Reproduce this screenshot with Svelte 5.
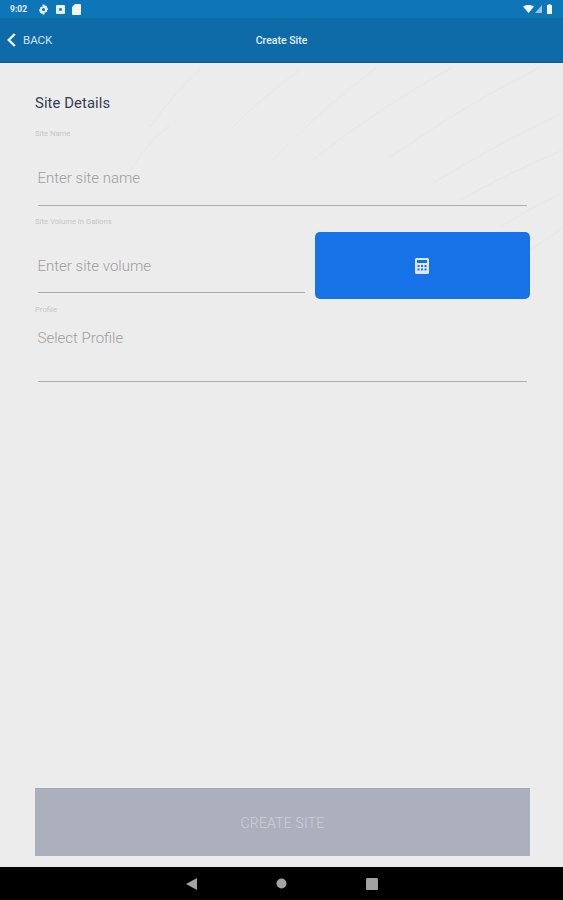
<script>
  const lines = [
    'M150 127 Q172 95 200 70', 'M233 127 Q262 97 300 70', 'M273 160 Q320 110 377 67', 'M313 160 Q375 110 453 67',
    'M390 157 Q460 108 540 67', 'M433 183 Q495 145 563 113', 'M460 200 Q510 172 563 150', 'M500 227 Q530 208 563 193',
    'M130 170 Q150 140 170 125', 'M530 250 L563 228'
  ];
</script>

<div class="screen">
  <header class="appbar">
    <div class="status">
      <span class="time">9:02</span>
      <svg class="ic" viewBox="0 0 12 12" width="11" height="11"><path fill="#e8f1f8" fill-rule="evenodd" d="M5 .5h2l.3 1.5 1-.5 1.500.9-.2 1.200 1.100.9v1.900l-1.100.9.2 1.200-1.500.9-1-.5L7 11.500H5l-.3-1.500-1 .5-1.500-.9.2-1.200L1.300 7.900V6L2.400 5.100 2.200 3.900 3.700 3l1 .5zM6 4.300a1.700 1.700 0 1 0 0 3.400 1.700 1.700 0 0 0 0-3.400z"/></svg>
      <svg class="ic box" viewBox="0 0 10 10" width="9" height="9"><path fill="#e8f1f8" fill-rule="evenodd" d="M1 0h8a1 1 0 0 1 1 1v8a1 1 0 0 1-1 1H1a1 1 0 0 1-1-1V1a1 1 0 0 1 1-1zM3.500 3.500v3h3v-3z"/></svg>
      <svg class="ic card" viewBox="0 0 9 11" width="9" height="11"><path fill="#f0f5fa" d="M3 0h5a1 1 0 0 1 1 1v9a1 1 0 0 1-1 1H1a1 1 0 0 1-1-1V3z"/></svg>
      <span class="spacer"></span>
      <svg viewBox="0 0 11 8" width="11" height="8"><path fill="#f4f8fb" d="M0 1.500C3 -.5 8 -.5 11 1.500L5.500 8z"/></svg>
      <svg class="signal" viewBox="0 0 7 8" width="7" height="8"><path fill="#9dc3dd" d="M7 0v8H0z"/></svg>
      <svg class="battery" viewBox="0 0 5 10" width="5" height="10"><path fill="#f4f8fb" d="M1.500 0h2v1H5v9H0V1h1.500z"/></svg>
    </div>
    <div class="toolbar">
      <div class="back">
        <svg viewBox="0 0 9 14" width="9" height="14"><path fill="none" stroke="#eef5fa" stroke-width="2.400" d="M7.800 1 1.800 7l6 6"/></svg>
        <span>BACK</span>
      </div>
      <span class="title">Create Site</span>
    </div>
  </header>

  <main class="content">
    <svg class="swirl" viewBox="0 63 563 300" width="563" height="300" aria-hidden="true">
      {#each lines as d}<path {d} fill="none" stroke="#e6e6e6" stroke-width="1"/>{/each}
    </svg>

    <div class="form">
      <h1>Site Details</h1>

      <label class="small first" for="name">Site Name</label>
      <div class="field name"><span id="name">Enter site name</span></div>

      <label class="small second" for="vol">Site Volume in Gallons</label>
      <div class="volume-row">
        <div class="field volume"><span id="vol">Enter site volume</span></div>
        <button class="calc" aria-label="Calculator">
          <svg viewBox="0 0 14 16" width="14" height="16"><path fill="#dfe8f8" fill-rule="evenodd" d="M1.500 0h11A1.500 1.500 0 0 1 14 1.500v13a1.500 1.500 0 0 1-1.500 1.500h-11A1.500 1.500 0 0 1 0 14.500v-13A1.500 1.500 0 0 1 1.500 0zM2 2v3h10V2zM2.500 7v2h2V7zm3.500 0v2h2V7zm3.500 0v2h2V7zm-7 3.500v2h2v-2zm3.500 0v2h2v-2zm3.500 0v2h2v-2z"/></svg>
        </button>
      </div>

      <label class="small third" for="profile">Profile</label>
      <div class="field profile"><span id="profile">Select Profile</span></div>
    </div>

    <button class="create">CREATE SITE</button>
  </main>

  <nav class="sysnav">
    <svg viewBox="0 0 11 12" width="11" height="12"><path fill="#a3a3a3" d="M11 0v12L0 6z"/></svg>
    <svg viewBox="0 0 11 11" width="11" height="11"><circle cx="5.500" cy="5.500" r="5" fill="#a3a3a3"/></svg>
    <svg viewBox="0 0 12 12" width="12" height="12"><rect width="12" height="12" rx="1.500" fill="#a3a3a3"/></svg>
  </nav>
</div>

<style>
  :global(body) { margin: 0; background: #ececec; }
  .screen {
    width: 563px; height: 900px; display: flex; flex-direction: column;
    font-family: "Roboto", "Noto Sans", sans-serif; overflow: hidden;
  }
  .appbar { flex: none; height: 63px; background: #0e6ba8; box-shadow: inset 0 -1px 0 #0b5f9e; }
  .status {
    height: 18px; background: #0f75b9; display: flex; align-items: center;
    padding: 0 10px; color: #e8f1f8;
  }
  .time { font-size: 8.500px; font-weight: 700; width: 24px; margin-right: 4px; }
  .ic { margin-right: 7px; }
  .spacer { flex: 1; }
  .signal { margin: 0 2px 0 1px; }
  .battery { margin: 0 1px 0 3px; }
  .toolbar { position: relative; height: 44px; display: flex; align-items: center; justify-content: center; }
  .back {
    position: absolute; left: 7px; top: 15px; display: flex; align-items: center; gap: 7px;
    color: #d3e3f0; font-size: 11.500px;
  }
  .title { color: #e6eff6; font-size: 10.500px; font-weight: 500; }
  .content { position: relative; flex: 1; display: flex; flex-direction: column; padding: 0 33px 11px 35px; background: #ececec; }
  .swirl { position: absolute; left: 0; top: 0; pointer-events: none; }
  .form { position: relative; flex: 1; display: flex; flex-direction: column; }
  h1 { margin: 32px 0 0; font-size: 14.800px; line-height: 16px; font-weight: 400; color: #343c52; letter-spacing: .1px; }
  .small { font-size: 7.700px; line-height: 8px; color: #c6c6c6; display: block; }
  .first { margin-top: 19px; }
  .second { margin-top: 12px; }
  .third { margin-top: 7px; }
  .field { margin-left: 2.500px; margin-right: 3px; border-bottom: 1.500px solid #adadad; color: #9d9d9d; font-size: 15px; font-weight: 300; box-sizing: border-box; }
  .name { height: 68px; padding-top: 30px; line-height: 20px; }
  .volume-row { display: flex; align-items: flex-start; gap: 10px; margin-top: 2px; }
  .volume { flex: none; width: 267px; margin: 0 0 0 2.500px; height: 65px; padding-top: 28px; line-height: 20px; }
  .calc {
    flex: none; width: 215px; height: 67px; margin-top: 4px; border: 0; border-radius: 5px; background: #1672e6;
    display: flex; align-items: center; justify-content: center; padding: 0;
  }
  .profile { height: 68px; padding-top: 14px; line-height: 20px; }
  .create {
    flex: none; height: 68px; border: 0; background: #acafbc; color: #ccced7; font: 300 14px "Roboto", sans-serif;
    padding: 2px 0 0; box-shadow: inset 0 1px 0 #a2a5b3; letter-spacing: .2px;
  }
  .sysnav {
    flex: none; height: 33px; background: #000; display: grid;
    grid-template-columns: 11px 11px 12px; justify-content: center; column-gap: 79px; align-items: center;
  }
</style>
